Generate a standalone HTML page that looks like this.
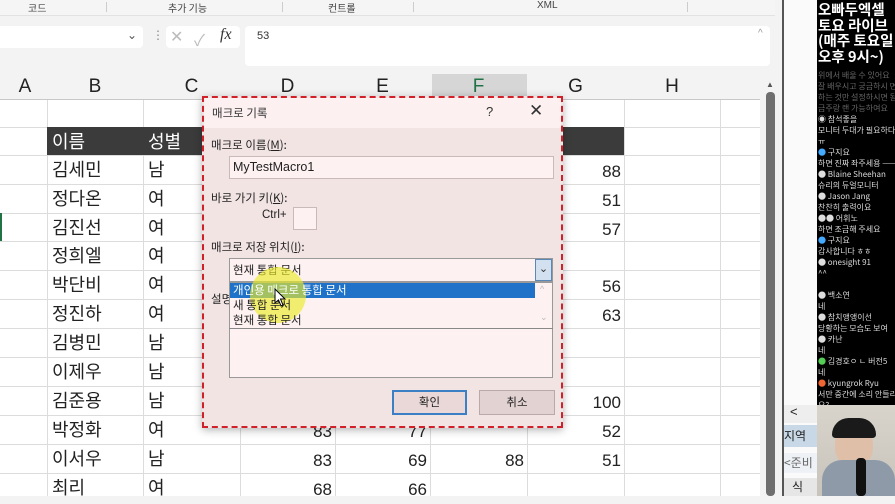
<!DOCTYPE html>
<html><head><meta charset="utf-8"><style>
*{margin:0;padding:0;box-sizing:border-box}
body{width:895px;height:496px;overflow:hidden;background:#f3f3f3;font-family:"Liberation Sans","Noto Sans CJK KR",sans-serif;position:relative}
.a{position:absolute}
.k{font-family:"Noto Sans CJK KR","Liberation Sans",sans-serif}
.cell{position:absolute;font-size:18px;color:#222;line-height:29px;font-family:"Noto Sans CJK KR",sans-serif}
.num{position:absolute;font-size:17px;color:#222;line-height:29px;text-align:right;font-family:"Liberation Sans",sans-serif}
.hl{position:absolute;left:0;width:760px;height:1px;background:#dcdcdc}
.vl{position:absolute;top:100px;width:1px;height:396px;background:#dcdcdc}
.ch{position:absolute;top:73px;height:27px;line-height:27px;text-align:center;font-size:19px;color:#222}
.dl{font-size:11.5px;color:#222}
.chat{position:absolute;left:1px;font-size:8px;color:#ddd;line-height:11px;white-space:nowrap;font-family:"Noto Sans CJK KR",sans-serif}
</style></head><body>
<div class="a" style="left:0;top:0;width:775px;height:16px;background:#f5f5f5;border-bottom:1px solid #e2e2e2"></div>
<div class="a k" style="left:28px;top:0;font-size:10px;color:#444">코드</div>
<div class="a k" style="left:168px;top:0;font-size:10px;color:#444">추가 기능</div>
<div class="a k" style="left:328px;top:0;font-size:10px;color:#444">컨트롤</div>
<div class="a" style="left:537px;top:0;font-size:10px;color:#444">XML</div>
<div class="a" style="left:106px;top:2px;width:1px;height:10px;background:#ccc"></div>
<div class="a" style="left:282px;top:2px;width:1px;height:10px;background:#ccc"></div>
<div class="a" style="left:413px;top:2px;width:1px;height:10px;background:#ccc"></div>
<div class="a" style="left:687px;top:2px;width:1px;height:10px;background:#ccc"></div>
<div class="a" style="left:0;top:26px;width:143px;height:22px;background:#fff;border-radius:0 4px 4px 0"></div>
<div class="a" style="left:127px;top:28px;font-size:12px;color:#555">⌄</div>
<div class="a" style="left:152px;top:28px;font-size:12px;color:#888">⋮</div>
<div class="a" style="left:166px;top:26px;width:74px;height:22px;background:#fff;border-radius:4px"></div>
<div class="a" style="left:170px;top:27px;font-size:16px;color:#bbb">✕</div>
<div class="a" style="left:194px;top:27px;font-size:16px;color:#bbb">✓</div>
<div class="a" style="left:220px;top:26px;font-size:16px;color:#333;font-style:italic;font-family:'Liberation Serif',serif">fx</div>
<div class="a" style="left:245px;top:26px;width:525px;height:40px;background:#fff;border-radius:4px"></div>
<div class="a" style="left:257px;top:30px;font-size:11px;color:#333">53</div>
<div class="a" style="left:758px;top:28px;font-size:10px;color:#999">^</div>
<div class="a" style="left:0;top:73px;width:760px;height:423px;background:#fff"></div>
<div class="a" style="left:0;top:73px;width:760px;height:27px;background:#f3f3f3;border-bottom:1px solid #c8c8c8"></div>
<div class="a" style="left:432px;top:74px;width:95px;height:26px;background:#d6d6d6"></div>
<div class="ch" style="left:3px;width:44px">A</div>
<div class="ch" style="left:47px;width:96px">B</div>
<div class="ch" style="left:143px;width:97px">C</div>
<div class="ch" style="left:240px;width:95px">D</div>
<div class="ch" style="left:335px;width:95px">E</div>
<div class="ch" style="left:430px;width:97px;color:#217346">F</div>
<div class="ch" style="left:527px;width:97px">G</div>
<div class="ch" style="left:624px;width:96px">H</div>
<div class="vl" style="left:47px"></div><div class="vl" style="left:143px"></div><div class="vl" style="left:240px"></div><div class="vl" style="left:335px"></div><div class="vl" style="left:430px"></div><div class="vl" style="left:527px"></div><div class="vl" style="left:624px"></div><div class="vl" style="left:720px"></div>
<div class="hl" style="top:127px"></div><div class="hl" style="top:155px"></div><div class="hl" style="top:184px"></div><div class="hl" style="top:213px"></div><div class="hl" style="top:241px"></div><div class="hl" style="top:270px"></div><div class="hl" style="top:299px"></div><div class="hl" style="top:328px"></div><div class="hl" style="top:357px"></div><div class="hl" style="top:386px"></div><div class="hl" style="top:415px"></div><div class="hl" style="top:444px"></div><div class="hl" style="top:473px"></div>
<div class="a" style="left:0;top:213px;width:2px;height:28px;background:#217346"></div>
<div class="a" style="left:47px;top:127px;width:577px;height:28px;background:#3b3b3b"></div>
<div class="cell" style="left:52px;top:127px;color:#fff">이름</div>
<div class="cell" style="left:148px;top:127px;color:#fff">성별</div>
<div class="cell" style="left:52px;top:155px">김세민</div><div class="cell" style="left:148px;top:155px">남</div>
<div class="cell" style="left:52px;top:184px">정다온</div><div class="cell" style="left:148px;top:184px">여</div>
<div class="cell" style="left:52px;top:213px">김진선</div><div class="cell" style="left:148px;top:213px">여</div>
<div class="cell" style="left:52px;top:241px">정희엘</div><div class="cell" style="left:148px;top:241px">여</div>
<div class="cell" style="left:52px;top:270px">박단비</div><div class="cell" style="left:148px;top:270px">여</div>
<div class="cell" style="left:52px;top:299px">정진하</div><div class="cell" style="left:148px;top:299px">여</div>
<div class="cell" style="left:52px;top:328px">김병민</div><div class="cell" style="left:148px;top:328px">남</div>
<div class="cell" style="left:52px;top:357px">이제우</div><div class="cell" style="left:148px;top:357px">남</div>
<div class="cell" style="left:52px;top:386px">김준용</div><div class="cell" style="left:148px;top:386px">남</div>
<div class="cell" style="left:52px;top:415px">박정화</div><div class="cell" style="left:148px;top:415px">여</div>
<div class="cell" style="left:52px;top:444px">이서우</div><div class="cell" style="left:148px;top:444px">남</div>
<div class="cell" style="left:52px;top:473px">최리</div><div class="cell" style="left:148px;top:473px">여</div>
<div class="num" style="left:527px;width:94px;top:157px">88</div>
<div class="num" style="left:527px;width:94px;top:186px">51</div>
<div class="num" style="left:527px;width:94px;top:215px">57</div>
<div class="num" style="left:527px;width:94px;top:272px">56</div>
<div class="num" style="left:527px;width:94px;top:301px">63</div>
<div class="num" style="left:527px;width:94px;top:388px">100</div>
<div class="num" style="left:527px;width:94px;top:417px">52</div>
<div class="num" style="left:527px;width:94px;top:446px">51</div>
<div class="num" style="left:240px;width:92px;top:417px">83</div>
<div class="num" style="left:335px;width:92px;top:417px">77</div>
<div class="num" style="left:240px;width:92px;top:446px">83</div>
<div class="num" style="left:335px;width:92px;top:446px">69</div>
<div class="num" style="left:430px;width:94px;top:446px">88</div>
<div class="num" style="left:240px;width:92px;top:475px">68</div>
<div class="num" style="left:335px;width:92px;top:475px">66</div>
<div class="a" style="left:760px;top:73px;width:24px;height:423px;background:#f3f3f3"></div>
<div class="a" style="left:766px;top:80px;font-size:8px;color:#555">▲</div>
<div class="a" style="left:766px;top:92px;width:9px;height:404px;background:#6f6f6f;border-radius:4px"></div>
<div class="a" style="left:782px;top:0;width:2px;height:496px;background:#555"></div>
<div class="a" style="left:784px;top:0;width:33px;height:496px;background:#fafafa"></div>
<div class="a" style="left:784px;top:405px;width:33px;height:18px;background:#eee"></div>
<div class="a" style="left:790px;top:404px;font-size:13px;color:#222">&lt;</div>
<div class="a k" style="left:784px;top:425px;width:33px;height:22px;background:#c9d8e6;font-size:12px;line-height:22px;color:#222">지역</div>
<div class="a k" style="left:784px;top:453px;width:33px;height:20px;background:#eef2f6;font-size:12px;line-height:20px;color:#666">&lt;준비</div>
<div class="a k" style="left:784px;top:478px;width:33px;height:18px;background:#e6e6e6;font-size:12px;line-height:18px;color:#222;padding-left:8px">식</div>
<div class="a" style="left:817px;top:0;width:78px;height:405px;background:#000;overflow:hidden">
<div class="a k" style="left:1px;top:2px;font-size:14.5px;font-weight:bold;color:#fff;line-height:15.5px;white-space:nowrap">오빠두엑셀<br>토요 라이브<br>(매주 토요일<br>오후 9시~)</div>
<div class="chat" style="top:70px;color:#666">위에서 배울 수 있어요<br>잘 배우시고 궁금하시 면<br>하는 것만 설정하시면 됨<br>금주랑 랜 가능하여요</div>
<div class="chat" style="top:114px">◉ 참석좋을<br>모니터 두대가 필요하다 ㅠ<br>ㅠ<br><span style="color:#4af">●</span> 구지요<br>하면 진짜 좌주세용 ——<br>● Blaine Sheehan<br>슈리의 듀얼모니터<br>● Jason Jang<br>찬찬히 출력이요<br>●● 어휘노<br>하면 조금해 주세요<br><span style="color:#4af">●</span> 구지요<br>감사합니다 ㅎㅎ<br>● onesight 91<br>^^<br><br>● 백소연<br>네<br>● 참치앵앵이선<br>당황하는 모습도 보여<br>● 카난<br>네<br><span style="color:#5c5">●</span> 김경호ㅇ ㄴ 버전5<br>네<br><span style="color:#e63">●</span> kyungrok Ryu<br>서만 중간에 소리 안들리나<br>요?<br><span style="color:#4af">●●</span> 단<br>하면 그게 보여주세요<br><span style="color:#c33">●</span> 1,636</div>
</div>
<div class="a" style="left:817px;top:405px;width:78px;height:91px;background:linear-gradient(#d8d4cc,#c8c4bc)"></div>
<div class="a" style="left:835px;top:425px;width:38px;height:42px;background:#e0bfa8;border-radius:45%"></div>
<div class="a" style="left:832px;top:418px;width:44px;height:20px;background:#1a1a1a;border-radius:20px 20px 4px 4px"></div>
<div class="a" style="left:822px;top:460px;width:73px;height:36px;background:#8f9aa8;border-radius:20px 20px 0 0"></div>
<div class="a" style="left:856px;top:458px;width:10px;height:38px;background:#111;border-radius:4px"></div>
<div class="a" style="left:202px;top:96px;width:361px;height:332px;background:#f3e4e4;border:2px dashed #d0202a;box-shadow:0 2px 8px rgba(0,0,0,.3)"></div>
<div class="a" style="left:204px;top:98px;width:357px;height:30px;background:#fcf0f0"></div>
<div class="a k dl" style="left:212px;top:105px;color:#333">매크로 기록</div>
<div class="a" style="left:486px;top:104px;font-size:13px;color:#333">?</div>
<div class="a" style="left:529px;top:101px;font-size:17px;color:#333">✕</div>
<div class="a k dl" style="left:211px;top:137px">매크로 이름(<u>M</u>):</div>
<div class="a" style="left:229px;top:156px;width:325px;height:23px;background:#fdf1f1;border:1px solid #c9b9b9"></div>
<div class="a dl" style="left:233px;top:160px;font-size:12.5px">MyTestMacro1</div>
<div class="a k dl" style="left:211px;top:190px">바로 가기 키(<u>K</u>):</div>
<div class="a dl" style="left:262px;top:209px">Ctrl+</div>
<div class="a" style="left:293px;top:207px;width:24px;height:23px;background:#fdf1f1;border:1px solid #c9b9b9"></div>
<div class="a k dl" style="left:211px;top:239px">매크로 저장 위치(<u>I</u>):</div>
<div class="a" style="left:229px;top:258px;width:324px;height:24px;background:#fdf1f1;border:1px solid #999"></div>
<div class="a k dl" style="left:233px;top:262px">현재 통합 문서</div>
<div class="a" style="left:535px;top:259px;width:17px;height:22px;background:#d3e0ef;border:1px solid #5a86b8;font-size:11px;text-align:center;color:#333;line-height:18px">⌄</div>
<div class="a k dl" style="left:211px;top:291px">설명</div>
<div class="a" style="left:229px;top:282px;width:324px;height:96px;background:#fdf1f1;border:1px solid #999"></div>
<div class="a" style="left:230px;top:283px;width:305px;height:15px;background:#1f72c8"></div>
<div class="a" style="left:250px;top:267px;width:56px;height:56px;border-radius:50%;background:rgba(235,235,40,.65)"></div>
<div class="a k dl" style="left:233px;top:283px;color:#fff;line-height:15px">개인용 매크로 통합 문서</div>
<div class="a k dl" style="left:233px;top:298px;line-height:15px">새 통합 문서</div>
<div class="a k dl" style="left:233px;top:313px;line-height:15px">현재 통합 문서</div>
<div class="a" style="left:540px;top:284px;font-size:9px;color:#bbb">^</div>
<div class="a" style="left:540px;top:312px;font-size:9px;color:#bbb">⌄</div>
<div class="a" style="left:229px;top:328px;width:324px;height:1px;background:#888"></div>
<svg class="a" style="left:274px;top:288px" width="14" height="20"><path d="M1 1 L1 15 L4.5 12 L7 18 L9 17 L6.5 11 L11 11 Z" fill="#fff" stroke="#000" stroke-width="1"/></svg>
<div class="a k dl" style="left:392px;top:390px;width:75px;height:25px;background:#ead8d8;border:2px solid #3b7fc4;text-align:center;line-height:21px">확인</div>
<div class="a k dl" style="left:479px;top:390px;width:76px;height:25px;background:#e3d2d2;border:1px solid #b9a9a9;text-align:center;line-height:23px">취소</div>
</body></html>
